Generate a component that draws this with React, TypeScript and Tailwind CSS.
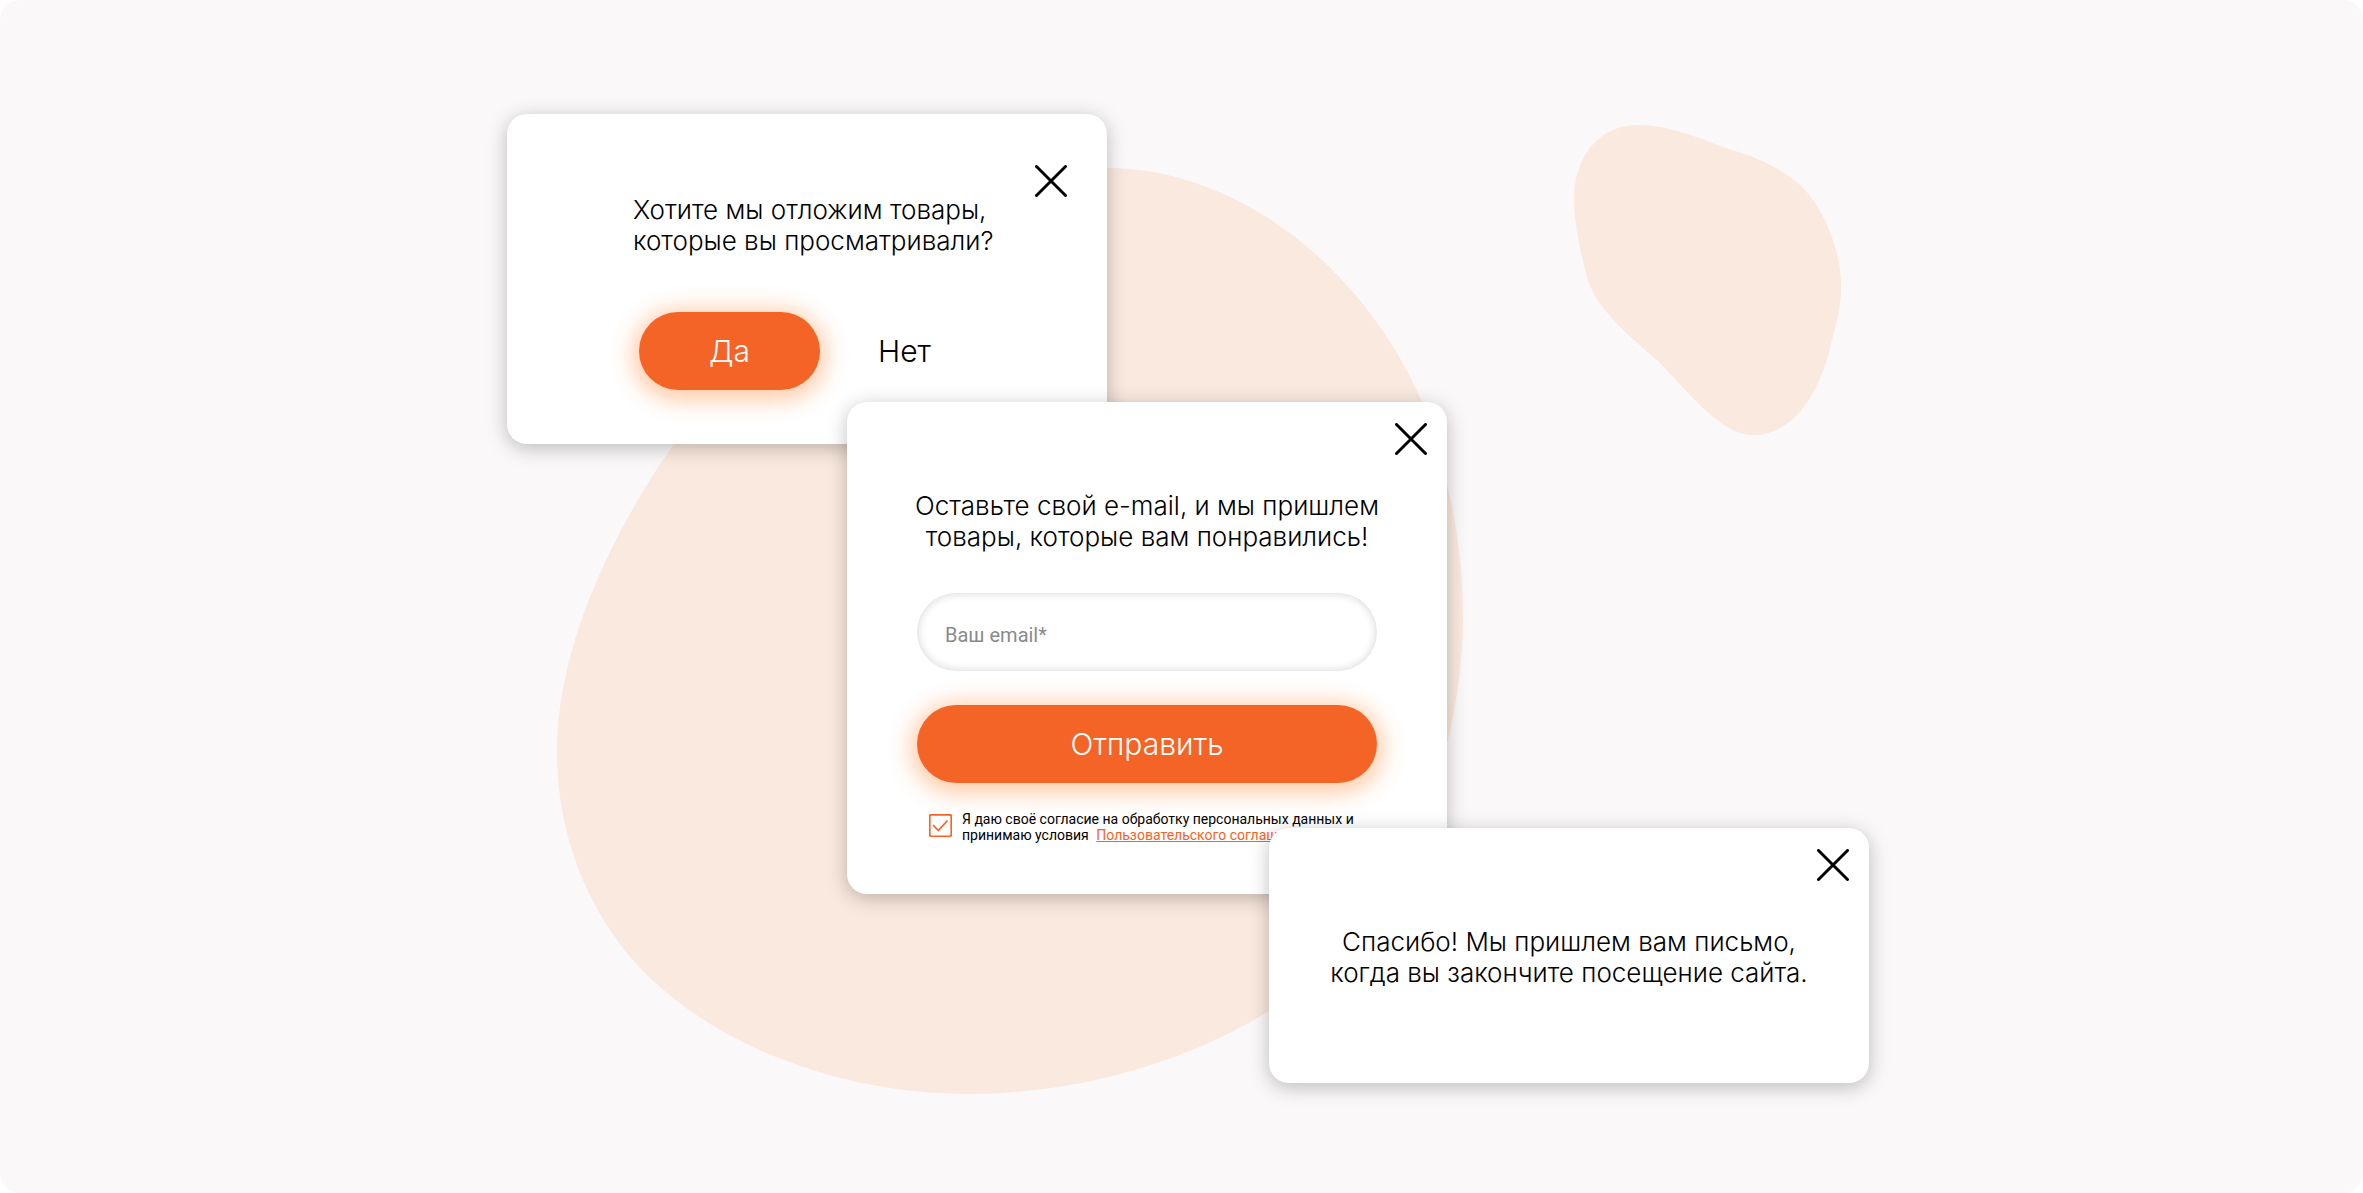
import type { ReactNode } from 'react';

const CloseButton = ({ className }: { className: string }) => (
  <button type="button" aria-label="Закрыть" className={`absolute cursor-pointer ${className}`}>
    <svg viewBox="0 0 32 32" className="size-8" fill="none" stroke="#000" strokeWidth="3" strokeLinecap="round">
      <path d="M1.5 1.5 30.5 30.5M30.5 1.5 1.5 30.5" />
    </svg>
  </button>
);

const Popup = ({ className, children }: { className: string; children: ReactNode }) => (
  <section
    className={`absolute w-[600px] rounded-[20px] bg-white shadow-[0_4px_20px_rgba(0,0,0,0.25)] ${className}`}
  >
    {children}
  </section>
);

const Blobs = () => (
  <svg
    viewBox="494 114 1375 980"
    className="absolute inset-0 size-full overflow-visible"
    fill="#fae9de"
    aria-hidden="true"
  >
    <path d="M1107 168C1240 168 1365 270 1422 402C1448 470 1463 545 1463 617C1463 665 1456 705 1447 744C1425 840 1370 945 1269 1011C1180 1066 1070 1094 967 1094C870 1094 740 1063 650 978C600 930 557 850 557 752C557 640 620 520 674 444C790 290 930 168 1107 168Z" />
    <path d="M1638 125C1668 125 1700 138 1728 149C1755 156 1781 168 1800 185C1820 203 1841 245 1841 287C1841 306 1837 320 1832 340C1822 387 1797 435 1753 435C1722 435 1692 396 1660 363C1640 344 1596 312 1587 277C1580 248 1574 224 1574 200C1574 155 1600 125 1638 125Z" />
  </svg>
);

const SaveItemsPopup = () => (
  <Popup className="left-[13px] top-0 px-[126px] pt-20 pb-[54px]">
    <CloseButton className="top-[51px] right-10" />
    <h2 className="text-[26px] leading-[31px] whitespace-nowrap">
      Хотите мы отложим товары,
      <br />
      которые вы просматривали?
    </h2>
    <div className="mt-14 flex items-center gap-[58px] pl-1.5 text-[30px]">
      <button
        type="button"
        className="h-[78px] w-[181px] rounded-full bg-[#f46427] text-white shadow-[0_4px_22px_6px_rgba(255,140,60,0.45)]"
      >
        Да
      </button>
      <button type="button">Нет</button>
    </div>
  </Popup>
);

const EmailPopup = () => (
  <Popup className="left-[353px] top-[288px] px-[70px] pt-[88px] pb-[51px]">
    <CloseButton className="top-[21px] right-5" />
    <h2 className="-mx-4 text-center text-[26px] leading-[31px] whitespace-nowrap">
      Оставьте свой e-mail, и мы пришлем
      <br />
      товары, которые вам понравились!
    </h2>
    <form className="mt-[41px]" onSubmit={(e) => e.preventDefault()}>
      <input
        type="email"
        aria-label="Ваш email"
        placeholder="Ваш email*"
        className="block h-[78px] w-full rounded-full px-7 pt-1.5 font-['Roboto',sans-serif] text-xl font-normal shadow-[inset_0_0_10px_rgba(0,0,0,0.18)] placeholder:text-[#8a8a8a]"
      />
      <button
        type="submit"
        className="mt-[34px] h-[78px] w-full rounded-full bg-[#f46427] text-[30px] text-white shadow-[0_4px_22px_6px_rgba(255,140,60,0.45)]"
      >
        Отправить
      </button>
      <div className="mt-7 flex gap-2.5 pl-3 font-['Roboto',sans-serif] text-sm leading-4 font-normal whitespace-nowrap">
        <div className="relative mt-[3px] size-[23px]">
          <input id="agree" type="checkbox" defaultChecked className="peer block size-full appearance-none" />
          <svg
            viewBox="0 0 23 23"
            className="pointer-events-none absolute inset-0 size-full peer-checked:[&>path]:block"
            fill="none"
            stroke="#f46427"
            strokeWidth="1.75"
          >
            <rect x="0.75" y="0.75" width="21.5" height="21.5" rx="1.5" />
            <path className="hidden" d="M4 11 9.3 16.5 18.5 6.5" />
          </svg>
        </div>
        <label htmlFor="agree">
          Я даю своё согласие на обработку персональных данных и
          <br />
          принимаю условия{' '}
          <a href="#terms" className="ml-1 text-[#f46427] underline">
            Пользовательского соглашения
          </a>
        </label>
      </div>
    </form>
  </Popup>
);

const ThanksPopup = () => (
  <Popup className="left-[775px] top-[714px] px-10 pt-[98px] pb-[95px]">
    <CloseButton className="top-[21px] right-5" />
    <p className="text-center text-[26px] leading-[31px] whitespace-nowrap">
      Спасибо! Мы пришлем вам письмо,
      <br />
      когда вы закончите посещение сайта.
    </p>
  </Popup>
);

export default function App() {
  return (
    <main className="flex min-h-screen items-start justify-center rounded-[20px] bg-[#faf8f9] pt-[114px] font-['Inter',sans-serif] font-light text-black">
      <div className="relative h-[980px] w-[1375px] shrink-0">
        <Blobs />
        <SaveItemsPopup />
        <EmailPopup />
        <ThanksPopup />
      </div>
    </main>
  );
}
